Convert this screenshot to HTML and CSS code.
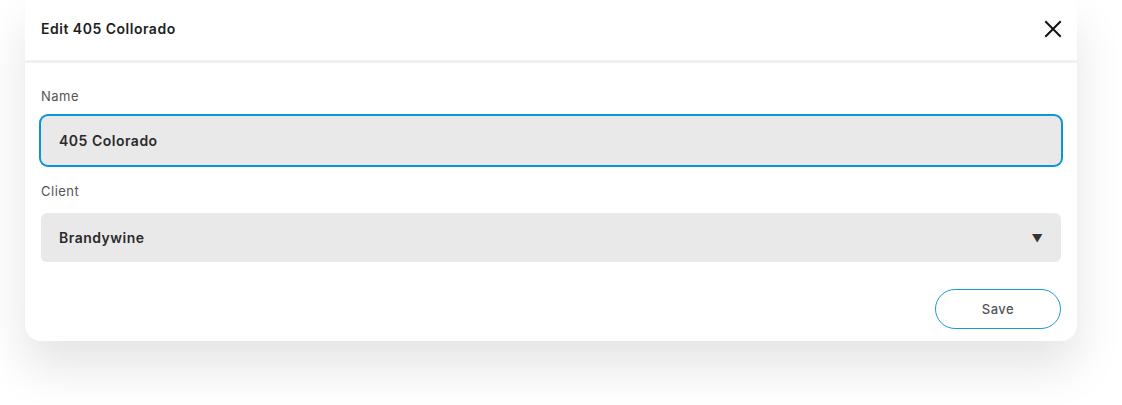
FILE: index.html
```html
<!DOCTYPE html>
<html>
<head>
<meta charset="utf-8">
<link rel="stylesheet" href="styles.css">
</head>
<body>
<div class="page">
  <div class="modal">
    <div class="modal-header">
      <span class="modal-title">Edit 405 Collorado</span>
      <button class="close-btn" aria-label="Close">
        <svg width="18" height="18" viewBox="0 0 18 18"><path d="M2 2 L16 16 M16 2 L2 16" stroke="#111" stroke-width="2" stroke-linecap="square" fill="none"/></svg>
      </button>
    </div>
    <div class="modal-body">
      <div class="field">
        <label class="field-label">Name</label>
        <div class="input input-focus">405 Colorado</div>
      </div>
      <div class="field">
        <label class="field-label">Client</label>
        <div class="input select">
          <span>Brandywine</span>
          <span class="caret">▼</span>
        </div>
      </div>
      <div class="actions">
        <button class="save-btn">Save</button>
      </div>
    </div>
  </div>
</div>
</body>
</html>
```

FILE: styles.css
```css
* { box-sizing: border-box; }
html, body { margin: 0; padding: 0; background: #fff; }
body { font-family: "Inter", "Liberation Sans", sans-serif; color: #222; letter-spacing: 0.5px; }
.page { padding: 0 0 65px 25px; min-height: 405px; }
.modal {
  width: 1052px;
  background: #fff;
  border-radius: 0 0 16px 16px;
  box-shadow: 0 26px 48px rgba(0,0,0,0.11);
}
.modal-header {
  height: 63px;
  display: flex;
  align-items: center;
  justify-content: space-between;
  padding: 0 15px 3px 16px;
  border-bottom: 3px solid #f0f0f0;
}
.modal-title { font-size: 14px; font-weight: 600; color: #1e1e1e; }
.close-btn { background: none; border: 0; padding: 0; width: 18px; height: 18px; display: flex; cursor: pointer; }
.modal-body { padding: 23px 16px 12px 16px; display: flex; flex-direction: column; }
.field { display: flex; flex-direction: column; }
.field + .field { margin-top: 16px; }
.field-label { font-size: 13px; color: #555; line-height: 20px; margin-bottom: 12px; }
.field:first-child .field-label { margin-bottom: 10px; }
.input {
  height: 49px;
  background: #e9e9e9;
  border-radius: 6px;
  padding: 0 18px;
  display: flex;
  align-items: center;
  font-size: 14px;
  font-weight: 600;
  color: #2b2b2b;
}
.input-focus { box-shadow: 0 0 0 2px #0a95d6; border-radius: 7px; }
.select { justify-content: space-between; padding-right: 18px; }
.caret { font-size: 11px; color: #333; letter-spacing: 0; }
.actions { display: flex; justify-content: flex-end; margin-top: 27px; }
.save-btn {
  width: 126px; height: 40px;
  border: 1px solid #1b9ad8;
  border-radius: 20px;
  background: #fff;
  font-family: inherit;
  letter-spacing: 0.5px;
  font-size: 13px;
  font-weight: 500;
  color: #555;
}
```
